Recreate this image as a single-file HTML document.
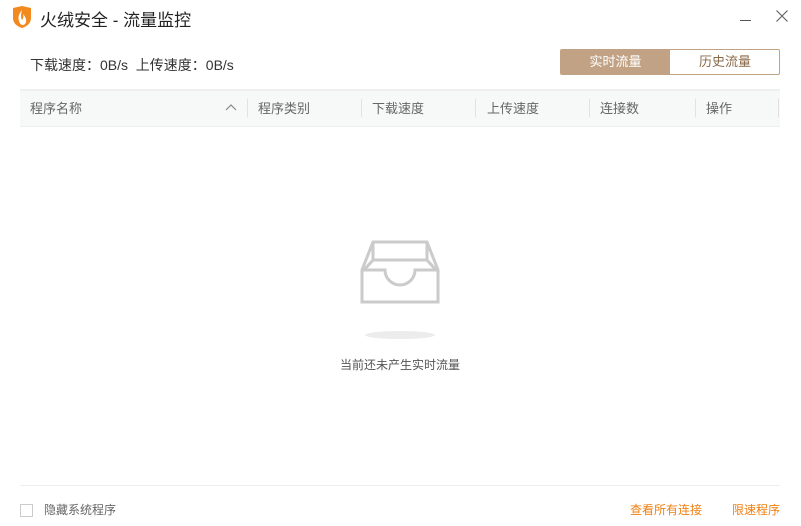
<!DOCTYPE html>
<html><head><meta charset="utf-8"><style>
*{margin:0;padding:0;box-sizing:border-box}
body{width:801px;height:526px;background:#fff;font-family:"Liberation Sans","Noto Sans CJK SC",sans-serif;position:relative;overflow:hidden;color:#333}
.a{position:absolute;white-space:nowrap}
.h{font-size:13px;color:#666;top:98px}
.sep{position:absolute;top:99px;width:1px;height:18px;background:#e2e2e2}
</style></head><body>
<svg class="a" style="left:11px;top:5px" width="22" height="24" viewBox="0 0 22 24"><path d="M2 3 L11 1 L20 3 L20 13 Q20 20 11 23 Q2 20 2 13Z" fill="#f28a1f"/><path d="M11 5 Q6 11 8 16 Q9 20 12 20 Q16 19 15 14 Q14 11 12 9 Q13 13 11 15 Q9 12 11 5Z" fill="#fff"/></svg>
<div class="a" style="left:40px;top:6px;font-size:17px;color:#222">火绒安全 - 流量监控</div>
<div class="a" style="left:740px;top:20px;width:11px;height:1px;background:#555"></div>
<svg class="a" style="left:776px;top:10px" width="12" height="12"><path d="M0.5 0.5L11.5 11.5M11.5 0.5L0.5 11.5" stroke="#666" stroke-width="1.2"/></svg>
<div class="a" style="left:30px;top:55px;font-size:14px;color:#333">下载速度：0B/s&nbsp; 上传速度：0B/s</div>
<div class="a" style="left:560px;top:49px;width:220px;height:26px;border:1px solid #c2a284;border-radius:2px;overflow:hidden;font-size:13px">
<div class="a" style="left:0;top:0;width:109px;height:24px;background:#c2a284;color:#fff;text-align:center;line-height:24px">实时流量</div>
<div class="a" style="left:109px;top:0;width:110px;height:24px;color:#8a6a4a;text-align:center;line-height:24px">历史流量</div></div>
<div class="a" style="left:20px;top:89px;width:760px;height:38px;background:#f7f8f8;border-top:2px solid #efefef;border-bottom:1px solid #eee"></div>
<div class="a h" style="left:30px">程序名称</div>
<svg class="a" style="left:225px;top:104px" width="12" height="8"><path d="M1 6L6 1L11 6" stroke="#888" fill="none" stroke-width="1.2"/></svg>
<div class="sep" style="left:247px"></div><div class="a h" style="left:258px">程序类别</div>
<div class="sep" style="left:361px"></div><div class="a h" style="left:372px">下载速度</div>
<div class="sep" style="left:475px"></div><div class="a h" style="left:487px">上传速度</div>
<div class="sep" style="left:589px"></div><div class="a h" style="left:600px">连接数</div>
<div class="sep" style="left:695px"></div><div class="a h" style="left:706px">操作</div>
<div class="sep" style="left:778px"></div>
<svg class="a" style="left:360px;top:240px" width="80" height="65" viewBox="0 0 80 65"><g fill="none" stroke="#cbcbcb" stroke-width="3"><path d="M13 2H67L78 30V62H2V30Z"/><path d="M13 2V20L4 30M67 2V20L76 30M13 20H67"/><path d="M2 30H25A15 15 0 0 0 55 30H78"/></g></svg>
<div class="a" style="left:365px;top:331px;width:70px;height:8px;border-radius:50%;background:#ececec"></div>
<div class="a" style="left:340px;top:356px;font-size:12px;color:#555">当前还未产生实时流量</div>
<div class="a" style="left:20px;top:485px;width:760px;height:1px;background:#eee"></div>
<div class="a" style="left:20px;top:504px;width:13px;height:13px;border:1px solid #ccc"></div>
<div class="a" style="left:44px;top:501px;font-size:12px;color:#666">隐藏系统程序</div>
<div class="a" style="left:630px;top:501px;font-size:12px;color:#f07f10">查看所有连接</div>
<div class="a" style="left:732px;top:501px;font-size:12px;color:#f07f10">限速程序</div>
</body></html>
